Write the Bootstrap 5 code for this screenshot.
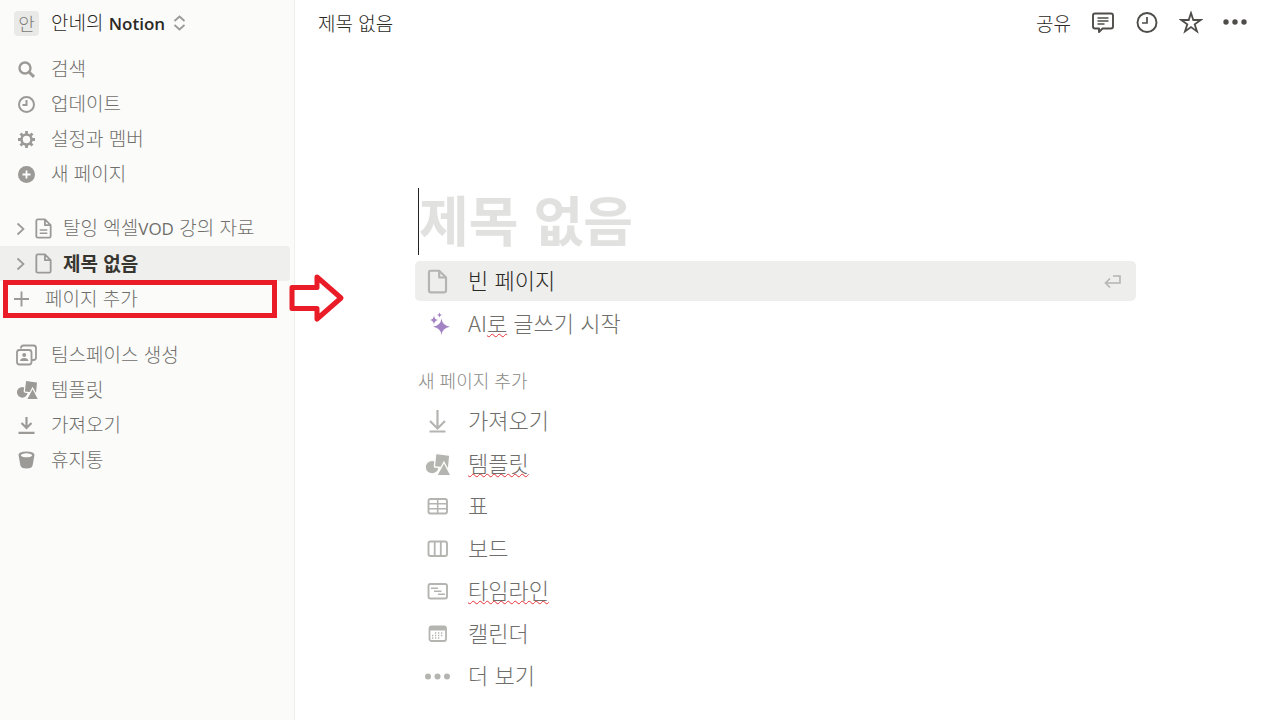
<!DOCTYPE html>
<html lang="ko">
<head>
<meta charset="utf-8">
<meta name="viewport" content="width=device-width, initial-scale=1">
<title>제목 없음</title>
<link href="https://cdn.jsdelivr.net/npm/bootstrap@5.3.0/dist/css/bootstrap.min.css" rel="stylesheet">
<style>
  body { font-family: "Noto Sans CJK KR", sans-serif; font-size: 19px; font-weight: 300; line-height: 35px; color: #37352f; background: #fff; }
  a, button { color: inherit; text-decoration: none; }
  button { border: 0; background: none; padding: 0; text-align: left; font-weight: inherit; }
  svg { display: block; flex: none; fill: none; stroke: currentColor; }
  .latin { font-family: "Open Sans", sans-serif; font-weight: 600; font-size: 17px; }
  .latin-soft { font-weight: 400; }
  .caption { padding-bottom: 2px; }
  .sidebar { width: 295px; background: #fbfbfa; border-right: 1px solid #f0f0ef; color: #6f6e6a; }
  .workspace { height: 46px; padding-left: 14px; color: #2b2924; }
  .avatar { width: 25px; height: 25px; line-height: 24px; font-size: 18px; border-radius: 4px; background: #e9e9e7; color: #7b7a76; }
  .sort-icon { color: #9b9a96; }
  .side-row { width: 100%; height: 35px; }
  .side-row svg { color: #9b9a96; }
  .menu-row { padding-left: 15px; gap: 12px; }
  .tree-row { padding-left: 15px; gap: 8px; }
  .tree-row .caption { padding-left: 2px; }
  .side-current { background: #efefee; border-radius: 0 4px 4px 0; color: #37352f; font-weight: 700; width: 290px; }
  .add-row { padding-left: 12px; gap: 15px; }
  .group-menu { padding-top: 5px; }
  .group-pages { margin-top: 20px; }
  .group-tools { margin-top: 21px; }
  .callout-box { position: absolute; left: 3px; top: -1px; width: 274px; height: 38px; border: 5px solid #ea1c27; pointer-events: none; }
  .callout-arrow { position: absolute; left: 289px; top: -8px; z-index: 2; }
  .side-row + .callout-box + .callout-arrow { color: #ea1c27; }
  .topbar { height: 46px; padding: 0 21px 0 23px; }
  .topbar svg { color: #4e4d49; }
  .topbar .caption { color: #2b2924; }
  .tools { gap: 20px; }
  .editor { padding: 142px 132px 0 120px; }
  .page-title { font-size: 54px; line-height: 61px; font-weight: 700; color: #e1e1e0; margin: 0 0 6px 3px; padding-bottom: 6px; border-left: 1px solid #222; }
  .option { width: 100%; height: 42px; padding-left: 8px; gap: 16px; font-size: 22px; line-height: 30px; color: #6f6e6a; }
  .option svg { color: #b4b4b1; }
  .option .caption { padding-bottom: 4px; }
  .option-active { height: 40px; background: #eeeeed; border-radius: 5px; color: #2b2924; margin-bottom: 2px; padding-right: 14px; }
  .option-list li:nth-child(even) { margin-top: 1px; }
  .section-label { font-size: 18px; line-height: 28px; font-weight: 300; color: #8a8985; margin: 21px 0 6px 3px; }
  .typo { text-decoration: underline wavy #e5333a 1px; text-decoration-skip-ink: none; text-underline-offset: 1px; }
</style>
</head>
<body>
<svg width="0" height="0" class="position-absolute" aria-hidden="true">
  <symbol id="shapes" viewBox="0 0 24 20"><g fill="currentColor" stroke="#fdfdfc" stroke-width="1.200"><circle cx="7.300" cy="12.300" r="6"/><path d="M11.300.5l10.500 1.300q.9.100.8 1l-1 10.700-11.400-1.300q-1-.1-.9-1l1.100-10q.1-.8.900-.7z"/><path d="M17.600 8l6.200 11.700H11.300z"/></g></symbol>
  <symbol id="page" viewBox="0 0 18 22"><path d="M3 1.500h7.500l6 6V19q0 1.500-1.500 1.500H3q-1.500 0-1.500-1.500V3q0-1.500 1.500-1.500zM10.500 1.500v6h6" stroke-width="1.900" stroke-linejoin="round"/></symbol>
  <symbol id="chevron" viewBox="0 0 10 14"><path d="M2 1.500L8 7l-6 5.500" stroke-width="1.700"/></symbol>
</svg>

<div class="d-flex min-vh-100">
  <nav class="sidebar flex-shrink-0" aria-label="사이드바">
    <button type="button" class="workspace d-flex align-items-center w-100">
      <span class="avatar text-center">안</span>
      <span class="caption ms-2 ps-1">안네의 <span class="latin">Notion</span></span>
      <svg class="sort-icon ms-2" width="13" height="16" viewBox="0 0 13 16"><path d="M1.500 6l5-4.500 5 4.500M1.500 10l5 4.500 5-4.500" stroke-width="1.800"/></svg>
    </button>

    <div class="group-menu">
      <button type="button" class="side-row menu-row d-flex align-items-center">
        <svg width="24" height="20" viewBox="0 0 24 20"><circle cx="10" cy="9" r="5.500" stroke-width="2.400"/><path d="M14 13l5 4.800" stroke-width="3"/></svg><span class="caption">검색</span></button>
      <button type="button" class="side-row menu-row d-flex align-items-center">
        <svg width="24" height="20" viewBox="0 0 24 20"><circle cx="11.500" cy="10.500" r="7.500" stroke-width="2"/><path d="M11.500 6v5H7.500" stroke-width="2"/></svg><span class="caption">업데이트</span></button>
      <button type="button" class="side-row menu-row d-flex align-items-center">
        <svg width="24" height="20" viewBox="0 0 24 20"><circle cx="11.500" cy="10.500" r="5" stroke-width="2.600"/><g stroke-width="2.800"><path d="M11.500 2v3M11.500 16v3M3 10.500h3M17 10.500h3M5.500 4.500l2 2M15.500 14.500l2 2M17.500 4.500l-2 2M7.500 14.500l-2 2"/></g></svg><span class="caption">설정과 멤버</span></button>
      <button type="button" class="side-row menu-row d-flex align-items-center">
        <svg width="24" height="20" viewBox="0 0 24 20"><circle cx="11.500" cy="10.500" r="8.500" fill="currentColor" stroke="none"/><path d="M11.500 6.500v8M7.500 10.500h8" stroke="#fff" stroke-width="1.800"/></svg><span class="caption">새 페이지</span></button>
    </div>

    <div class="group-pages">
      <a href="#lecture" class="side-row tree-row d-flex align-items-center">
        <svg width="11" height="14"><use href="#chevron"/></svg>
        <svg width="19" height="21" viewBox="0 0 18 22"><use href="#page"/><path d="M5 12.500h8M5 16h8" stroke-width="1.500"/></svg>
        <span class="caption">탈잉 엑셀<span class="latin latin-soft">VOD</span> 강의 자료</span></a>
      <a href="#untitled" class="side-row tree-row side-current d-flex align-items-center" aria-current="page">
        <svg width="11" height="14"><use href="#chevron"/></svg>
        <svg width="19" height="21"><use href="#page"/></svg>
        <span class="caption">제목 없음</span></a>
      <div class="position-relative">
        <button type="button" class="side-row add-row d-flex align-items-center">
          <svg width="18" height="18" viewBox="0 0 18 18"><path d="M9.500 1.500v15M2 9h15" stroke-width="1.900"/></svg><span class="caption">페이지 추가</span></button>
        <span class="callout-box"></span>
        <svg class="callout-arrow" width="56" height="50" viewBox="0 0 56 50"><path d="M3 14.500h25V4l24 21-24 21V35.500H3z" stroke-width="5" stroke-linejoin="round"/></svg>
      </div>
    </div>

    <div class="group-tools">
      <button type="button" class="side-row menu-row d-flex align-items-center">
        <svg width="24" height="22" viewBox="0 0 24 22"><path d="M6 4.500V4q0-2.500 2.500-2.500h10Q21 1.500 21 4v9.500Q21 16 18.500 16H17" stroke-width="1.800"/><rect x="2" y="6" width="14.500" height="14.500" rx="2.500" stroke-width="1.800"/><g fill="currentColor" stroke="none"><circle cx="9.200" cy="11" r="2"/><path d="M5 17q.3-3 4.200-3t4.300 3z"/></g></svg><span class="caption">팀스페이스 생성</span></button>
      <button type="button" class="side-row menu-row d-flex align-items-center">
        <svg width="24" height="20"><use href="#shapes"/></svg><span class="caption">템플릿</span></button>
      <button type="button" class="side-row menu-row d-flex align-items-center">
        <svg width="24" height="20" viewBox="0 0 24 20"><path d="M11.500 2v11M6.500 8l5 5 5-5M3.500 17.800h16" stroke-width="2.200"/></svg><span class="caption">가져오기</span></button>
      <button type="button" class="side-row menu-row d-flex align-items-center">
        <svg width="24" height="20" viewBox="0 0 24 20"><path d="M3.500 5q0-3.500 8-3.500t8 3.500l-1.800 10q-.5 3.500-6.200 3.500t-6.200-3.500z" fill="currentColor" stroke="none"/><ellipse cx="11.500" cy="5.300" rx="5.700" ry="2" fill="#fbfbfa" stroke="none"/></svg><span class="caption">휴지통</span></button>
    </div>
  </nav>

  <main class="flex-grow-1">
    <header class="topbar d-flex align-items-center justify-content-between">
      <a href="#untitled" class="caption">제목 없음</a>
      <div class="tools d-flex align-items-center">
        <button type="button" class="caption">공유</button>
        <button type="button" aria-label="댓글"><svg width="24" height="24" viewBox="0 0 24 24"><path d="M4 2.500h16q2 0 2 2v11q0 2-2 2h-8.500L8 21v-3.500H4q-2 0-2-2v-11q0-2 2-2z" stroke-width="1.900" stroke-linejoin="round"/><path d="M6.500 7h11M6.500 10h11M6.500 13h7" stroke-width="1.500"/></svg></button>
        <button type="button" aria-label="업데이트"><svg width="24" height="24" viewBox="0 0 24 24"><circle cx="12" cy="11.500" r="9.500" stroke-width="1.900"/><path d="M12 6v6H7" stroke-width="1.700"/></svg></button>
        <button type="button" aria-label="즐겨찾기"><svg width="24" height="24" viewBox="0 0 24 24"><path d="M12 2l2.300 7h7.400l-6 4.300 2.300 7.100-6-4.400-6 4.400 2.300-7.100-6-4.300h7.400z" stroke-width="1.800"/></svg></button>
        <button type="button" aria-label="더 보기"><svg width="24" height="24" viewBox="0 0 24 24"><g fill="currentColor" stroke="none"><circle cx="3" cy="11" r="2.700"/><circle cx="12" cy="11" r="2.700"/><circle cx="21" cy="11" r="2.700"/></g></svg></button>
      </div>
    </header>

    <section class="editor">
      <h1 class="page-title">제목 없음</h1>
      <button type="button" class="option option-active d-flex align-items-center">
        <svg width="29" height="25"><use href="#page"/></svg><span class="caption">빈 페이지</span>
        <svg class="ms-auto" width="19" height="16" viewBox="0 0 19 16"><path d="M10 3h7v7H2.500M7 5.500L2.500 10 7 14.500" stroke-width="1.600"/></svg></button>
      <button type="button" class="option d-flex align-items-center">
        <svg width="29" height="24" viewBox="0 0 29 24"><g fill="#a383c4" stroke="none"><path d="M18.500 6.500q.8 7 8.500 8.300-7.700 1.300-8.500 8.200-.8-6.900-8.500-8.200 7.700-1.300 8.500-8.300z"/><path d="M11 3.500q.5 4 4 4.500-3.500.5-4 4.500-.5-4-4-4.500 3.500-.5 4-4.500z"/><path d="M16.500.500q.3 2.200 2.500 2.500-2.200.3-2.500 2.500-.3-2.200-2.500-2.500 2.200-.3 2.500-2.500z"/></g></svg><span class="caption">AI<span class="typo">로</span> 글쓰기 시작</span></button>

      <h2 class="section-label">새 페이지 추가</h2>
      <ul class="option-list list-unstyled mb-0">
        <li><button type="button" class="option d-flex align-items-center">
          <svg width="29" height="26" viewBox="0 0 29 26"><path d="M14.500 2v18M7 13l7.500 7.500L22 13M6.500 23.500h16" stroke-width="2.200"/></svg><span class="caption">가져오기</span></button></li>
        <li><button type="button" class="option d-flex align-items-center">
          <svg width="29" height="23"><use href="#shapes"/></svg><span class="caption typo">템플릿</span></button></li>
        <li><button type="button" class="option d-flex align-items-center">
          <svg width="29" height="20" viewBox="0 0 29 20"><rect x="5.500" y="3" width="18.500" height="14.500" rx="2" stroke-width="1.900"/><path d="M5 7.700h19M5 12.700h19M14.700 3v14" stroke-width="1.600"/></svg><span class="caption">표</span></button></li>
        <li><button type="button" class="option d-flex align-items-center">
          <svg width="29" height="20" viewBox="0 0 29 20"><rect x="5.500" y="2.500" width="18.500" height="14.500" rx="2" stroke-width="1.900"/><path d="M11.700 3v14M17.800 3v14" stroke-width="1.800"/></svg><span class="caption">보드</span></button></li>
        <li><button type="button" class="option d-flex align-items-center">
          <svg width="29" height="20" viewBox="0 0 29 20"><rect x="5.500" y="3" width="18.500" height="14.500" rx="2" stroke-width="1.900"/><path d="M8 7.200h7M11 10.200h7.500M15 13.200h7" stroke-width="1.500"/></svg><span class="caption typo">타임라인</span></button></li>
        <li><button type="button" class="option d-flex align-items-center">
          <svg width="29" height="20" viewBox="0 0 29 20"><rect x="6.500" y="2.500" width="16.500" height="14.500" rx="2" stroke-width="1.800"/><path d="M6 4.500h17" stroke-width="4"/><path d="M12 9h9M9 11.500h12M9 14h9" stroke-width="1.300" stroke-dasharray="1.300 1.700"/></svg><span class="caption">캘린더</span></button></li>
        <li><button type="button" class="option d-flex align-items-center">
          <svg width="29" height="20" viewBox="0 0 29 20"><g fill="currentColor" stroke="none"><circle cx="5" cy="10.500" r="3"/><circle cx="14.500" cy="10.500" r="3"/><circle cx="24" cy="10.500" r="3"/></g></svg><span class="caption">더 보기</span></button></li>
      </ul>
    </section>
  </main>
</div>
<script src="https://cdn.jsdelivr.net/npm/bootstrap@5.3.0/dist/js/bootstrap.bundle.min.js"></script>
</body>
</html>
